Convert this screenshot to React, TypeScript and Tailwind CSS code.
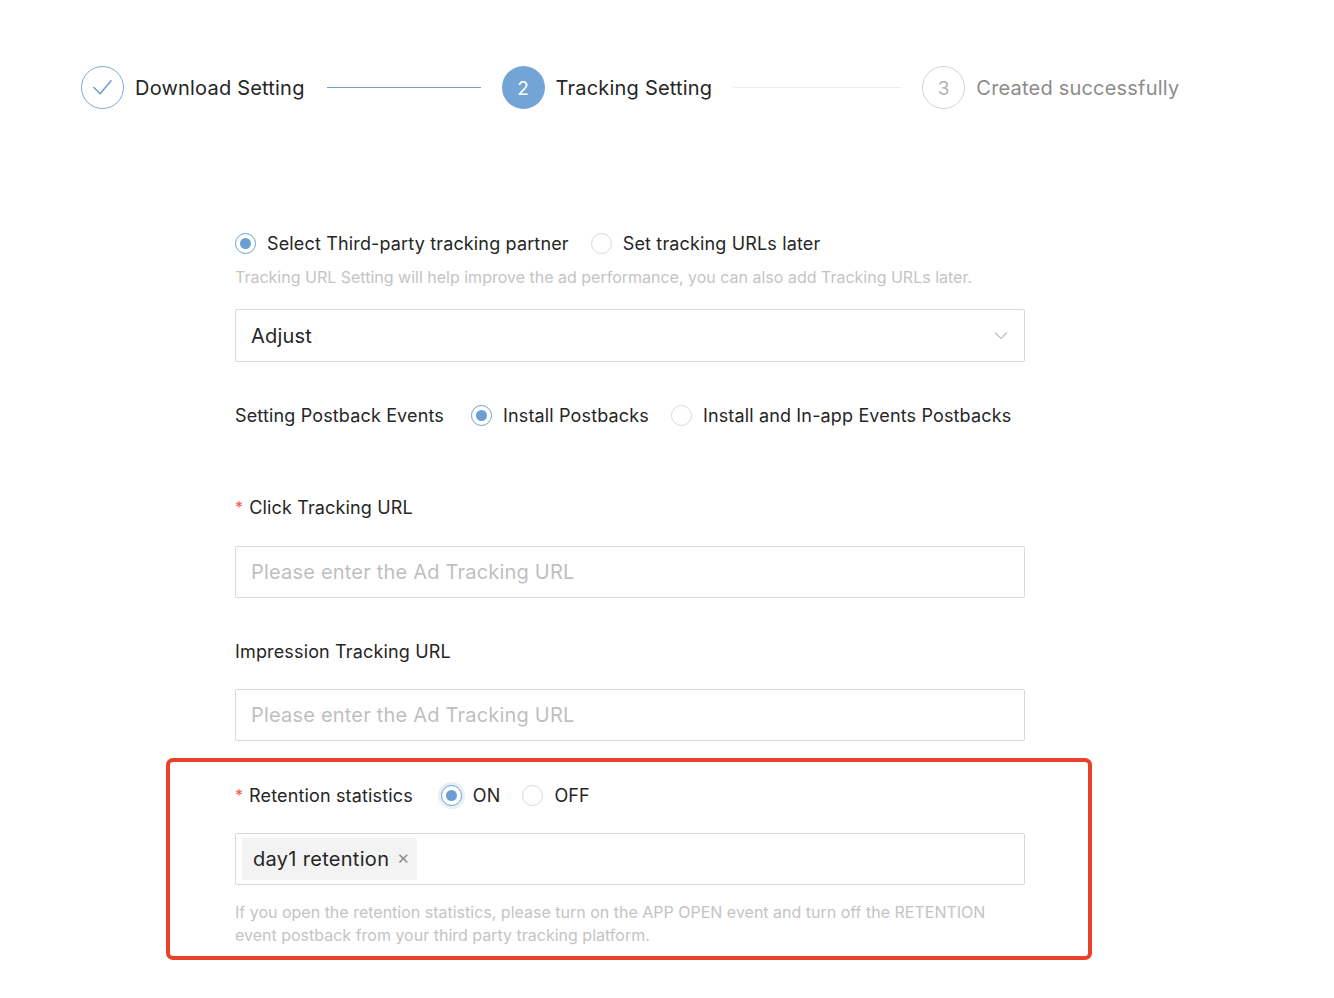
import React from "react";

function Radio({ checked, halo }: { checked?: boolean; halo?: boolean }) {
  return (
    <span
      className={
        "flex h-[21px] w-[21px] shrink-0 items-center justify-center rounded-full border bg-white " +
        (checked ? "border-[#6b9fd3] " : "border-[#d9d9d9] ") +
        (halo ? "shadow-[0_0_0_3px_#e7eff8]" : "")
      }
    >
      {checked && <span className="h-[11px] w-[11px] rounded-full bg-[#6b9fd3]" />}
    </span>
  );
}

function RadioOption({ label, checked, halo }: { label: string; checked?: boolean; halo?: boolean }) {
  return (
    <label className="flex items-center gap-[11px]">
      <Radio checked={checked} halo={halo} />
      <span className="text-[18px] tracking-[0.15px] text-[#262626]">{label}</span>
    </label>
  );
}

function Steps() {
  return (
    <div className="flex items-center pl-[81px] pt-[66px] tracking-[0.2px]">
      <div className="flex h-[43px] w-[43px] items-center justify-center rounded-full border border-[#7ba8d5]">
        <svg width="43" height="43" viewBox="0 0 43 43" fill="none">
          <path d="M12.5 21.5 L19 28 L30.5 14.5" stroke="#6a9fd2" strokeWidth="1.6" strokeLinecap="round" strokeLinejoin="round" />
        </svg>
      </div>
      <span className="ml-[11px] text-[20px] text-[#262626]">Download Setting</span>
      <span className="ml-[22px] h-px w-[154px] bg-[#6a9fd2]" />
      <div className="ml-[21px] flex h-[43px] w-[43px] items-center justify-center rounded-full bg-[#72a5d5] pt-[3px] text-[19px] text-white">
        2
      </div>
      <span className="ml-[11px] text-[20px] text-[#262626]">Tracking Setting</span>
      <span className="ml-[21px] h-px w-[168px] bg-[#ececec]" />
      <div className="ml-[21px] flex h-[43px] w-[43px] items-center justify-center rounded-full border border-[#d3d3d3] pt-[3px] text-[19px] text-[#b3b3b3]">
        3
      </div>
      <span className="ml-[11px] text-[20px] text-[#8c8c8c]">Created successfully</span>
    </div>
  );
}

function Input({ placeholder }: { placeholder: string }) {
  return (
    <div className="flex h-[52px] w-full items-center rounded-[2px] border border-[#d9d9d9] px-[15px]">
      <span className="text-[20px] tracking-[0.2px] text-[#bfbfbf]">{placeholder}</span>
    </div>
  );
}

export default function App() {
  return (
    <div className="min-h-screen w-full bg-white font-['Inter','Noto_Sans',sans-serif] text-[#262626]">
      <Steps />
      <div className="ml-[235px] mt-[121px] flex w-[790px] flex-col">
        <div className="flex h-[26px] items-center gap-[22px]">
          <RadioOption label="Select Third-party tracking partner" checked />
          <RadioOption label="Set tracking URLs later" />
        </div>
        <p className="mt-[10px] text-[16px] leading-[22px] text-[#c4c4c4]">
          Tracking URL Setting will help improve the ad performance, you can also add Tracking URLs later.
        </p>
        <div className="mt-[21px] flex h-[53px] items-center justify-between rounded-[2px] border border-[#d9d9d9] pl-[15px] pr-[16px]">
          <span className="text-[20px] tracking-[0.2px] text-[#262626]">Adjust</span>
          <svg width="14" height="9" viewBox="0 0 14 9" fill="none">
            <path d="M1 1.5 L7 7.5 L13 1.5" stroke="#bfbfbf" strokeWidth="1.2" />
          </svg>
        </div>
        <div className="mt-[40px] flex h-[26px] items-center">
          <span className="mr-[27px] text-[18px] tracking-[0.15px] text-[#262626]">Setting Postback Events</span>
          <div className="flex items-center gap-[22px]">
            <RadioOption label="Install Postbacks" checked />
            <RadioOption label="Install and In-app Events Postbacks" />
          </div>
        </div>
        <div className="mt-[66px] flex h-[26px] items-center text-[18px] tracking-[0.15px]">
          <span className="mr-[6px] text-[16px] text-[#f5574a]">*</span>
          <span>Click Tracking URL</span>
        </div>
        <div className="mt-[26px]">
          <Input placeholder="Please enter the Ad Tracking URL" />
        </div>
        <div className="mt-[40px] flex h-[26px] items-center text-[18px] tracking-[0.15px]">Impression Tracking URL</div>
        <div className="mt-[25px]">
          <Input placeholder="Please enter the Ad Tracking URL" />
        </div>
        <div className="-ml-[69px] mt-[17px] w-[926px] rounded-[7px] border-4 border-[#ea4129] pb-[9px] pl-[65px] pr-[63px] pt-[20px]">
          <div className="flex h-[26px] items-center">
            <span className="mr-[6px] text-[16px] text-[#f5574a]">*</span>
            <span className="mr-[28px] text-[18px] tracking-[0.15px]">Retention statistics</span>
            <div className="flex items-center gap-[22px]">
              <RadioOption label="ON" checked halo />
              <RadioOption label="OFF" />
            </div>
          </div>
          <div className="mt-[25px] flex h-[52px] items-center rounded-[2px] border border-[#d9d9d9] px-[6px]">
            <span className="flex h-[42px] items-center gap-[8px] rounded-[2px] bg-[#f3f3f3] pl-[11px] pr-[7px]">
              <span className="text-[20px] tracking-[0.3px] text-[#262626]">day1 retention</span>
              <span className="text-[15px] text-[#8c8c8c]">✕</span>
            </span>
          </div>
          <p className="mt-[16px] text-[16px] leading-[23px] text-[#c4c4c4]">
            If you open the retention statistics, please turn on the APP OPEN event and turn off the RETENTION
            <br />
            event postback from your third party tracking platform.
          </p>
        </div>
      </div>
    </div>
  );
}
